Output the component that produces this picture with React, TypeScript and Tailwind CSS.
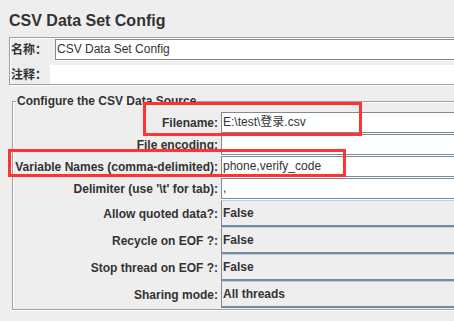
const textRows = [
  { label: "Filename:", value: "E:\\test\\登录.csv" },
  { label: "File encoding:", value: "" },
  { label: "Variable Names (comma-delimited):", value: "phone,verify_code" },
  { label: "Delimiter (use '\\t' for tab):", value: "," },
];

const comboRows = [
  { label: "Allow quoted data?:", value: "False" },
  { label: "Recycle on EOF ?:", value: "False" },
  { label: "Stop thread on EOF ?:", value: "False" },
  { label: "Sharing mode:", value: "All threads" },
];

export default function App() {
  return (
    <div className="relative w-[454px] h-[321px] overflow-hidden bg-[#eeeeee] text-[#333333] font-['Liberation_Sans','Noto_Sans_CJK_SC',sans-serif] text-[12px]">
      {/* title */}
      <div className="h-[37px] pl-[9px] pt-[11px] text-[16px] leading-[20px] font-bold">
        CSV Data Set Config
      </div>

      {/* name / comment panel */}
      <div className="ml-[9px] pt-[1px] border border-r-0 border-[#a0a0a0] shadow-[inset_1px_1px_0_#fff,0_1px_0_#fff]">
        <div className="flex h-[22px]">
          <div className="w-[45px] pl-[1px] h-[21px] flex items-center font-bold">名称：</div>
          <div className="flex-1 h-[21px] bg-white border border-r-0 border-[#7a8a99] shadow-[0_1px_0_#fff] pl-[1px] leading-[19px]">
            CSV Data Set Config
          </div>
        </div>
        <div className="flex h-[19px] mt-[4px]">
          <div className="w-[40px] pl-[1px] flex items-center font-bold">注释：</div>
          <div className="flex-1 bg-white" />
        </div>
      </div>

      {/* csv source */}
      <fieldset className="ml-[12px] mt-[9px] pt-[4px] pb-[1px] border border-r-0 border-[#a0a0a0] shadow-[inset_1px_1px_0_#fff,0_1px_0_#fff]">
        <legend className="ml-[3px] px-[1px] font-bold leading-[14px]">Configure the CSV Data Source</legend>
        <div className="grid grid-cols-[205px_1fr] gap-x-[3px]">
          {textRows.map((r) => (
            <div key={r.label} className="contents">
              <div className="h-[22px] pb-[1px] flex items-center justify-end font-bold whitespace-nowrap">
                {r.label}
              </div>
              <div className="h-[22px]">
                <div className="h-[21px] bg-white border border-r-0 border-[#7a8a99] shadow-[0_1px_0_#fff] pl-[1px] leading-[19px] whitespace-nowrap">
                  {r.value}
                </div>
              </div>
            </div>
          ))}
          {comboRows.map((r) => (
            <div key={r.label} className="contents">
              <div className="h-[27px] flex items-center justify-end font-bold whitespace-nowrap">
                {r.label}
              </div>
              <div className="h-[27px] border-t border-t-[#b8cfe5] border-l border-l-[#7a8a99] border-b-2 border-b-[#7a8a99] pl-[1px] font-bold leading-[24px] whitespace-nowrap">
                {r.value}
              </div>
            </div>
          ))}
        </div>
      </fieldset>

      {/* annotation boxes */}
      <div className="absolute left-[143px] top-[102px] w-[219px] h-[34px] border-[3px] border-[#ff3333]" />
      <div className="absolute left-[8px] top-[149px] w-[338px] h-[28px] border-[3px] border-[#ff3333]" />
    </div>
  );
}
